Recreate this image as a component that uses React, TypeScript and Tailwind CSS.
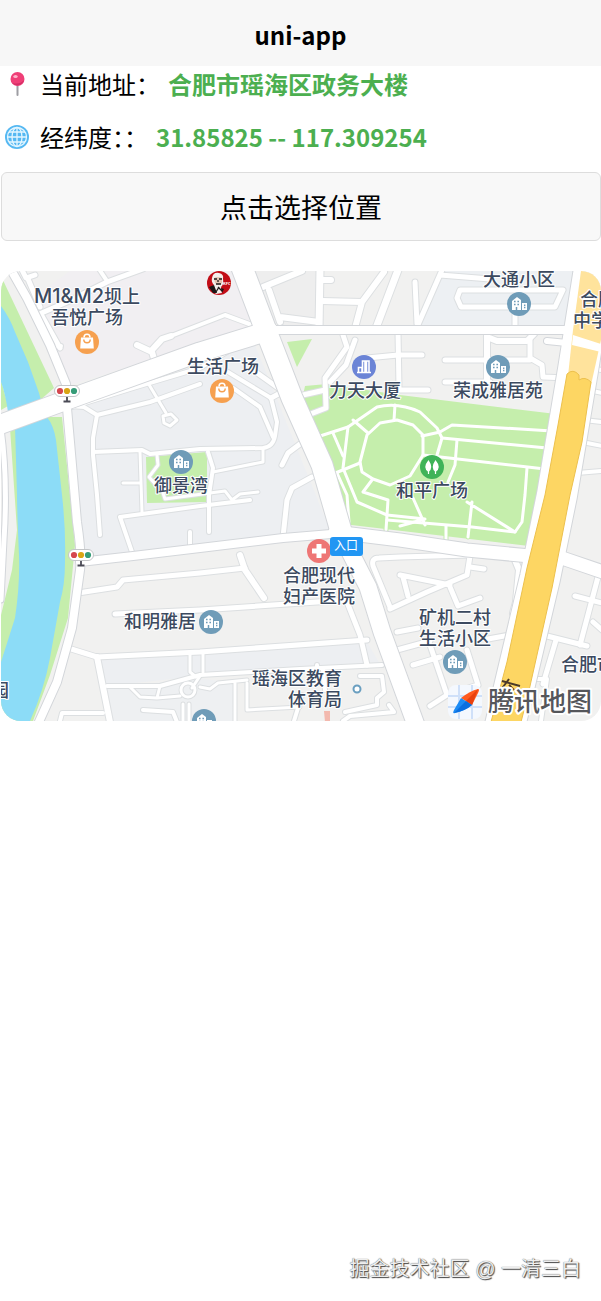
type Road = { d: string; w: number };

type Label = {
  text: string;
  latin?: string;
  x: number;
  y: number;
  anchor?: "start" | "middle" | "end";
};

const land = [
  { fill: "#f1eff2", d: "M70 271H235L258 326L70 385L30 300Z" },
  { fill: "#edeff2", d: "M70 410L255 345L332 535L82 560Z" },
  { fill: "#edf0f3", d: "M440 271H582L573 330H417Z" },
  { fill: "#edeff2", d: "M97 657L367 642L380 664L200 676L107 686Z" },
  { fill: "#eef0f2", d: "M107 688L200 678L236 684V721H112Z" },
  { fill: "#eeeeee", d: "M256 326H319V271H247Z" },
];

const greens = [
  "M305 386L327 384L400 395L556 414L529 546L343 524L300 410Z",
  "M287 342L312 339L297 367Z",
  "M146 457L207 452V502L147 503Z",
  "M1 276L54 388L38 402L1 308Z",
  "M1 380L8 406L1 410Z",
  "M10 428L16 424L47 417H62L70 495L75 545L68 618L50 675L33 721H1V615L12 570L17 530Z",
];

const river = [
  "M1 306Q10 318 15 332L28 362L39 393L42 404L8 412Q5 392 1 382Z",
  "M15 426L47 417Q54 426 56 440L62 495Q66 530 65 562Q65 585 60 602L50 658Q44 690 30 721H1V662L15 618Q20 585 19 555Q17 510 17 495Z",
];

const smallRoads: Road[] = [
  // north west
  { d: "M37 315L67 302L107 282L143 269", w: 5 },
  { d: "M99 269L107 281", w: 4 },
  { d: "M22 270L26 278L35 275M28 279L40 307M42 316L60 348", w: 5 },
  { d: "M50 347L61 346", w: 4 },
  { d: "M137 345L152 352L155 362M152 350L162 339L171 336", w: 6 },
  { d: "M171 336L225 315L252 325", w: 4 },
  { d: "M72 407L133 388L200 368L227 352", w: 4 },
  { d: "M70 406L84 407L97 415L150 402L200 384", w: 4 },
  { d: "M148 383L166 413", w: 3 },
  { d: "M163 416L171 414L177 420L170 426L164 423Z", w: 3 },
  { d: "M97 415L93 438L93 455L97 495L100 535", w: 4 },
  { d: "M93 452L142 450L150 454L200 449L263 448Q273 447 275 436L277 422L271 398L228 372", w: 4 },
  { d: "M253 370L281 390M271 398L284 391", w: 5 },
  { d: "M233 388L260 407L273 437", w: 4 },
  { d: "M140 452L142 512M123 483H140", w: 3 },
  { d: "M157 455L158 465L149 477L157 486", w: 3 },
  { d: "M208 452L213 468L209 495V532", w: 4 },
  { d: "M213 472L263 462V448", w: 3 },
  { d: "M282 465L288 453L300 444", w: 5 },
  { d: "M312 477L292 488L287 500L283 537", w: 5 },
  { d: "M162 490L165 499L225 491L232 500L240 494L258 492", w: 3 },
  { d: "M120 517L200 506L250 500M120 517L132 552M190 532V547", w: 4 },
  // north
  { d: "M263 287L302 271M269 290L280 322M280 317L319 322", w: 6 },
  { d: "M323 280H331M322 301L362 302L384 272M362 302L355 328", w: 6 },
  { d: "M398 270L376 328M320 269L319 330", w: 7 },
  { d: "M343 335L347 347L325 378L326 408L308 415M303 395L325 390", w: 5 },
  { d: "M355 340L346 365L330 382M367 358L398 355M398 332L399 388", w: 5 },
  { d: "M415 282L417 324M442 270L417 327M440 275L490 279", w: 5 },
  { d: "M460 290L457 298L461 307H555L563 290Z", w: 5 },
  { d: "M515 305V328M400 355H422M400 390H428M445 360H530M445 382H490", w: 5 },
  { d: "M487 335V380M487 337L497 341H527L534 334", w: 6 },
  { d: "M530 340V358L542 365L543 377L568 378", w: 5 },
  // south west
  { d: "M78 593L117 587L123 580L200 573L245 568", w: 5 },
  { d: "M240 555L245 570L264 598", w: 6 },
  { d: "M115 614L200 610L347 600", w: 5 },
  { d: "M68 648L97 657L200 652L367 640", w: 5 },
  { d: "M97 657L110 722", w: 6 },
  { d: "M347 602L360 635L367 665", w: 5 },
  { d: "M107 686H160L200 675L300 669L382 665", w: 4 },
  { d: "M190 653V672L196 677M160 686L157 698L140 697L130 687M157 698L180 696", w: 3 },
  { d: "M195 690A7 7 0 1 1 181 690A7 7 0 1 1 195 690M183 704V721M189 704V721M192 688L200 676", w: 3 },
  { d: "M143 710L173 712L177 722M60 721L62 713H103", w: 4 },
  { d: "M203 652V672M200 687L210 689L218 683L247 680M235 683V721M247 683V710L300 707", w: 3 },
  { d: "M317 665V680M302 695L294 721M323 670L325 690", w: 4 },
  { d: "M360 676H382L384 692L377 698V705L345 712", w: 4 },
  { d: "M343 721L350 716L394 712L389 705", w: 4 },
  // south
  { d: "M390 607L373 566Q371 558 379 558L400 557L470 555", w: 5 },
  { d: "M390 609L427 592L467 575L470 556", w: 5 },
  { d: "M400 575L450 585M403 577L408 596M450 587L458 606L480 598M470 567L484 569", w: 5 },
  { d: "M515 560L519 570L516 602L513 613", w: 6 },
  { d: "M397 632L418 628M488 639L515 634M397 650L430 641M413 665L440 657", w: 5 },
  { d: "M400 668L417 721", w: 7 },
  { d: "M430 645L447 695L430 706M467 650L478 685L456 692", w: 5 },
  // east
  { d: "M588 390L602 393M584 420L602 422M582 442L602 446M577 473L602 471M595 369L602 370", w: 4 },
  { d: "M575 596L602 603M598 577L580 645M543 635L587 646M556 640L543 684M593 622L602 630", w: 5 },
  { d: "M537 679H547L541 721", w: 4 },
];

const parkPaths: Road[] = [
  { d: "M317 437L348 427L377 407Q398 402 420 412L437 428L442 438L437 455", w: 3 },
  { d: "M362 472L360 462L367 435L380 423L397 420L413 425L423 435V455L410 476L390 485L373 479Z", w: 3 },
  { d: "M348 427L343 468L357 502L387 515L425 519L400 526", w: 3 },
  { d: "M333 433L343 456M328 476L360 463M337 473L347 495L349 522", w: 3 },
  { d: "M353 420L368 433M395 405L394 420", w: 3 },
  { d: "M422 436L440 432L452 425L552 431M442 438L547 448M423 455L545 469", w: 3 },
  { d: "M457 440L455 465L448 482M527 468L525 495L522 522L515 532L472 527L387 520", w: 3 },
  { d: "M467 502L515 532M472 502L468 537M413 498L425 525M372 480L363 492L388 500L386 530M446 526V540", w: 3 },
];

const mainRoads: Road[] = [
  { d: "M10 268L27 298L50 345L66 384L67 408L72 465L77 522Q82 555 80 570L72 628L57 682L38 724", w: 8 },
  { d: "M-4 426L75 397L200 352L268 331", w: 19 },
  { d: "M262 330H572", w: 8 },
  { d: "M241 265L265 328L292 398L322 465L343 538", w: 21 },
  { d: "M343 538L368 587L382 632L416 725", w: 17 },
  { d: "M80 562L133 556L200 548L283 538L343 533", w: 8 },
  { d: "M335 532L400 540L467 550L530 556", w: 13 },
  { d: "M562 558L606 573", w: 13 },
  { d: "M547 341L567 343L602 350", w: 6 },
  { d: "M1 428Q8 480 4 540L1 600", w: 5 },
  { d: "M597 250L578 370L557 495L540 578L504 730", w: 40 },
];

const labels: Label[] = [
  { text: "坝上", latin: "M1&M2", x: 87, y: 303 },
  { text: "吾悦广场", x: 87, y: 324 },
  { text: "生活广场", x: 223, y: 373 },
  { text: "御景湾", x: 181, y: 492 },
  { text: "力天大厦", x: 365, y: 397 },
  { text: "大通小区", x: 519, y: 286 },
  { text: "荣成雅居苑", x: 498, y: 397 },
  { text: "和平广场", x: 432, y: 497 },
  { text: "合肥现代", x: 319, y: 582 },
  { text: "妇产医院", x: 319, y: 603 },
  { text: "和明雅居", x: 160, y: 628 },
  { text: "矿机二村", x: 455, y: 624 },
  { text: "生活小区", x: 455, y: 645 },
  { text: "瑶海区教育", x: 342, y: 685, anchor: "end" },
  { text: "体育局", x: 342, y: 706, anchor: "end" },
  { text: "合肥", x: 580, y: 306, anchor: "start" },
  { text: "中学", x: 573, y: 327, anchor: "start" },
  { text: "合肥市", x: 561, y: 671, anchor: "start" },
  { text: "园", x: -9, y: 697, anchor: "start" },
];

const Roads = ({ roads, casing }: { roads: Road[]; casing: string }) => (
  <g fill="none" strokeLinecap="round" strokeLinejoin="round">
    {roads.map((r) => (
      <path key={r.d} d={r.d} stroke={casing} strokeWidth={r.w + 2} />
    ))}
    {roads.map((r) => (
      <path key={r.d + r.w} d={r.d} stroke="#fff" strokeWidth={r.w} />
    ))}
  </g>
);

const Building = ({ x, y }: { x: number; y: number }) => (
  <g transform={`translate(${x} ${y})`}>
    <circle r="12" fill="#6f9cb8" />
    <path d="M-7 6V-3L-2 -7L2 -4V6ZM3 6V-1H8V6Z" fill="#fff" />
    <path
      d="M-5 -2.5H-3.4M-1.6 -2.5H0M-5 .5H-3.4M-1.6 .5H0M5 1.2H6.4M5 3.6H6.4M-2.5 3V6"
      stroke="#6f9cb8"
      strokeWidth="1.5"
    />
  </g>
);

const Bag = ({ x, y }: { x: number; y: number }) => (
  <g transform={`translate(${x} ${y})`}>
    <circle r="12" fill="#f6a04f" />
    <path d="M-6 -4.5H6L6.8 6.5H-6.8Z" fill="#fff" />
    <path d="M-3 -4.5A3 3.2 0 0 1 3 -4.5" fill="none" stroke="#fff" strokeWidth="1.5" />
    <path d="M-3.2 -2.5A3.2 3.2 0 0 0 3.2 -2.5" fill="none" stroke="#f6a04f" strokeWidth="1.4" />
  </g>
);

const TrafficLight = ({ x, y }: { x: number; y: number }) => (
  <g transform={`translate(${x} ${y})`}>
    <path d="M0 5V10M-3.5 10.5H3.5" stroke="#4a4a55" strokeWidth="1.8" />
    <rect x="-12.5" y="-5.5" width="25" height="11" rx="5.5" fill="#fff" stroke="#c4c6c8" />
    <circle cx="-7" r="3.1" fill="#d5474f" />
    <circle r="3.1" fill="#d9a514" />
    <circle cx="7" r="3.1" fill="#369c78" />
  </g>
);

const Kfc = () => (
  <g transform="translate(219 283)">
    <circle r="12" fill="#c20d17" />
    <path d="M-7 -5Q-6 -11 0 -10Q5 -9 4 -4Q5 1 2 4L3 10L-3 11L-8 5L-5 2Q-8 -1 -7 -5Z" fill="#f4efec" />
    <path d="M-5 -5Q-2 -7 3 -5V0Q0 3 -4 0Z" fill="#e3c3b2" />
    <path d="M-5 -4H-2M0 -4H3M-1 -3V-1M-3 1H2M0 4L-3 9M-1 4L3 8" stroke="#211b1b" strokeWidth="1.3" />
    <path d="M-10 4L-5 2L-2 10L-6 10ZM2 5L5 6L3 10Z" fill="#1d1717" />
    <text x="4" y="2" fontSize="4" fontWeight="700" fill="#fff">
      KFC
    </text>
  </g>
);

const TencentLogo = () => (
  <g>
    <rect x="448" y="685" width="34" height="34" rx="8" fill="#f4f8fe" />
    <path d="M459 685V719M472 685V719M448 696H482M448 707H482" stroke="#cfe0f9" strokeWidth="2" />
    <path d="M478 689Q480 689 478 693L472 705L461 698Q470 691 478 689Z" fill="#ff5a1f" />
    <path d="M461 698L472 705Q465 711 455 713Q452 714 454 710Z" fill="#1d8cf5" />
    <path d="M478 689L472 705L466 701Z" fill="#e8410f" />
    <path d="M454 713L466 701L472 705Q465 711 454 713Z" fill="#0b6fe0" />
    <text
      x="488"
      y="711"
      fontSize="26"
      fontWeight="500"
      fill="#55565a"
      stroke="#fff"
      strokeWidth="4"
      strokeLinejoin="round"
      paintOrder="stroke"
    >
      腾讯地图
    </text>
  </g>
);

function LocationMap() {
  return (
    <svg
      viewBox="1 271 600 450"
      className="mt-[30px] block h-auto w-full rounded-[20px] font-['Noto_Sans_CJK_SC',sans-serif]"
      role="img"
      aria-label="腾讯地图"
    >
      <rect x="1" y="271" width="600" height="450" fill="#f1f1f0" />
      {land.map((p) => (
        <path key={p.d} d={p.d} fill={p.fill} />
      ))}
      {greens.map((d) => (
        <path key={d} d={d} fill="#c5eeac" />
      ))}
      {river.map((d) => (
        <path key={d} d={d} fill="#8cdcf7" />
      ))}
      <Roads roads={smallRoads} casing="#dcdfe1" />
      <Roads roads={parkPaths} casing="#c5eeac" />
      <Roads roads={mainRoads} casing="#d3d6da" />

      <path d="M581 271H601V340L591 385H567L573 330Z" fill="#ffe39c" />
      <path d="M573 335L601 344V352L572 345Z" fill="#fff" />
      <path
        d="M567 374Q573 368 579 375V380Q585 376 591 382L582 442L570 495L552 588L528 695L521 722H491L507 662L527 568L545 495L558 425Z"
        fill="#fdd663"
        stroke="#ecc04d"
      />
      <path d="M324 711H330V722H325Z" fill="#f3b9ae" />

      <Kfc />
      <Bag x={87} y={342} />
      <Bag x={222} y={391} />
      <Building x={181} y={462} />
      <Building x={519} y={304} />
      <Building x={498} y={367} />
      <Building x={211} y={622} />
      <Building x={455} y={662} />
      <Building x={204} y={721} />
      <g transform="translate(364 367)">
        <circle r="12" fill="#6b84d6" />
        <path
          d="M-7 5.5H7M-5.5 5V0.5H-2V5M-1.5 5V-6H1V5M2.5 5V-6H5V5"
          fill="none"
          stroke="#fff"
          strokeWidth="1.6"
        />
      </g>
      <g transform="translate(432 467)">
        <circle r="12" fill="#3fb358" />
        <path d="M-3.5 -7Q-10 1 -3.5 5Q2 1 -3.5 -7ZM3.5 -7Q-2 1 3.5 5Q10 1 3.5 -7Z" fill="#fff" />
        <path d="M-3.5 4V7M3.5 4V7" stroke="#fff" strokeWidth="1.2" />
      </g>
      <g transform="translate(319 551)">
        <circle r="12" fill="#ee7675" />
        <path d="M0 -7V7M-7 0H7" stroke="#fff" strokeWidth="5" />
      </g>
      <circle cx="357" cy="689" r="3.5" fill="#fff" stroke="#6a9fc0" strokeWidth="2" />
      <TrafficLight x={67} y={391} />
      <TrafficLight x={81} y={555} />

      <rect x="330" y="537" width="33" height="19" rx="3" fill="#2196f3" />
      <text x="346" y="550" fontSize="12" textAnchor="middle" fill="#fff">
        入口
      </text>

      <g
        fontSize="18"
        fontWeight="500"
        fill="#3c4a60"
        stroke="#fff"
        strokeWidth="2"
        strokeLinejoin="round"
        paintOrder="stroke"
      >
        {labels.map((l) => (
          <text key={l.text} x={l.x} y={l.y} textAnchor={l.anchor ?? "middle"}>
            {l.latin && (
              <tspan fontFamily="Inter" fontSize="20">
                {l.latin}
              </tspan>
            )}
            {l.text}
          </text>
        ))}
      </g>
      <path d="M502 681L520 686M509 679L500 691M509 685L514 690" stroke="#4b3a2a" strokeWidth="2" />
      <TencentLogo />
    </svg>
  );
}

const PinIcon = () => (
  <svg viewBox="0 0 24 24" className="size-6" aria-hidden="true">
    <path d="M12.5 12V23" stroke="#9e9ea3" strokeWidth="2" strokeLinecap="round" />
    <circle cx="12.5" cy="7" r="7" fill="#ef3f77" />
    <path d="M7 11A7 7 0 0 0 19 8Q15 13 7 11Z" fill="#d42e66" />
    <ellipse cx="10.5" cy="4.5" rx="2.2" ry="1.6" fill="#ffb3cb" />
  </svg>
);

const GlobeIcon = () => (
  <svg viewBox="0 0 24 24" className="size-6" aria-hidden="true">
    <circle cx="12" cy="12" r="12" fill="#55b8f2" />
    <g fill="none" stroke="#e4f6ff" strokeWidth="1.3">
      <circle cx="12" cy="12" r="9.5" />
      <ellipse cx="12" cy="12" rx="5" ry="9.5" />
      <path d="M12 2.5V21.5M2.5 12H21.5M4 7H20M4 17H20" />
    </g>
  </svg>
);

export default function App() {
  return (
    <div className="flex min-h-screen flex-col bg-white font-['Noto_Sans_CJK_SC',sans-serif] text-black">
      <header className="bg-[#f7f7f7] pt-4 pb-3">
        <h1 className="text-center text-2xl leading-[38px] font-bold">uni-app</h1>
      </header>

      <main className="pl-px">
        <div className="flex flex-col gap-[17px] pl-1 text-2xl leading-9">
          <p className="flex items-center">
            <PinIcon />
            <span className="ml-[11px]">当前地址：</span>
            <strong className="ml-2 text-[#4caf50]">合肥市瑶海区政务大楼</strong>
          </p>
          <p className="flex items-center">
            <GlobeIcon />
            <span className="ml-[11px]">经纬度：：</span>
            <strong className="ml-2 text-[#4caf50]">31.85825 -- 117.309254</strong>
          </p>
        </div>
        <button
          type="button"
          className="mt-[17px] w-full rounded-md border border-[#dddddd] bg-[#f8f8f8] py-[14px] text-[27px] leading-[39px]"
        >
          点击选择位置
        </button>
        <LocationMap />
      </main>

      <footer className="mt-auto pr-5 pb-4 text-right font-['Liberation_Sans','Noto_Sans_CJK_SC',sans-serif] text-xl leading-8 text-[#eeeeee] [text-shadow:0_0_1px_#444,1px_1px_1px_#444]">
        掘金技术社区 @ 一清三白
      </footer>
    </div>
  );
}
